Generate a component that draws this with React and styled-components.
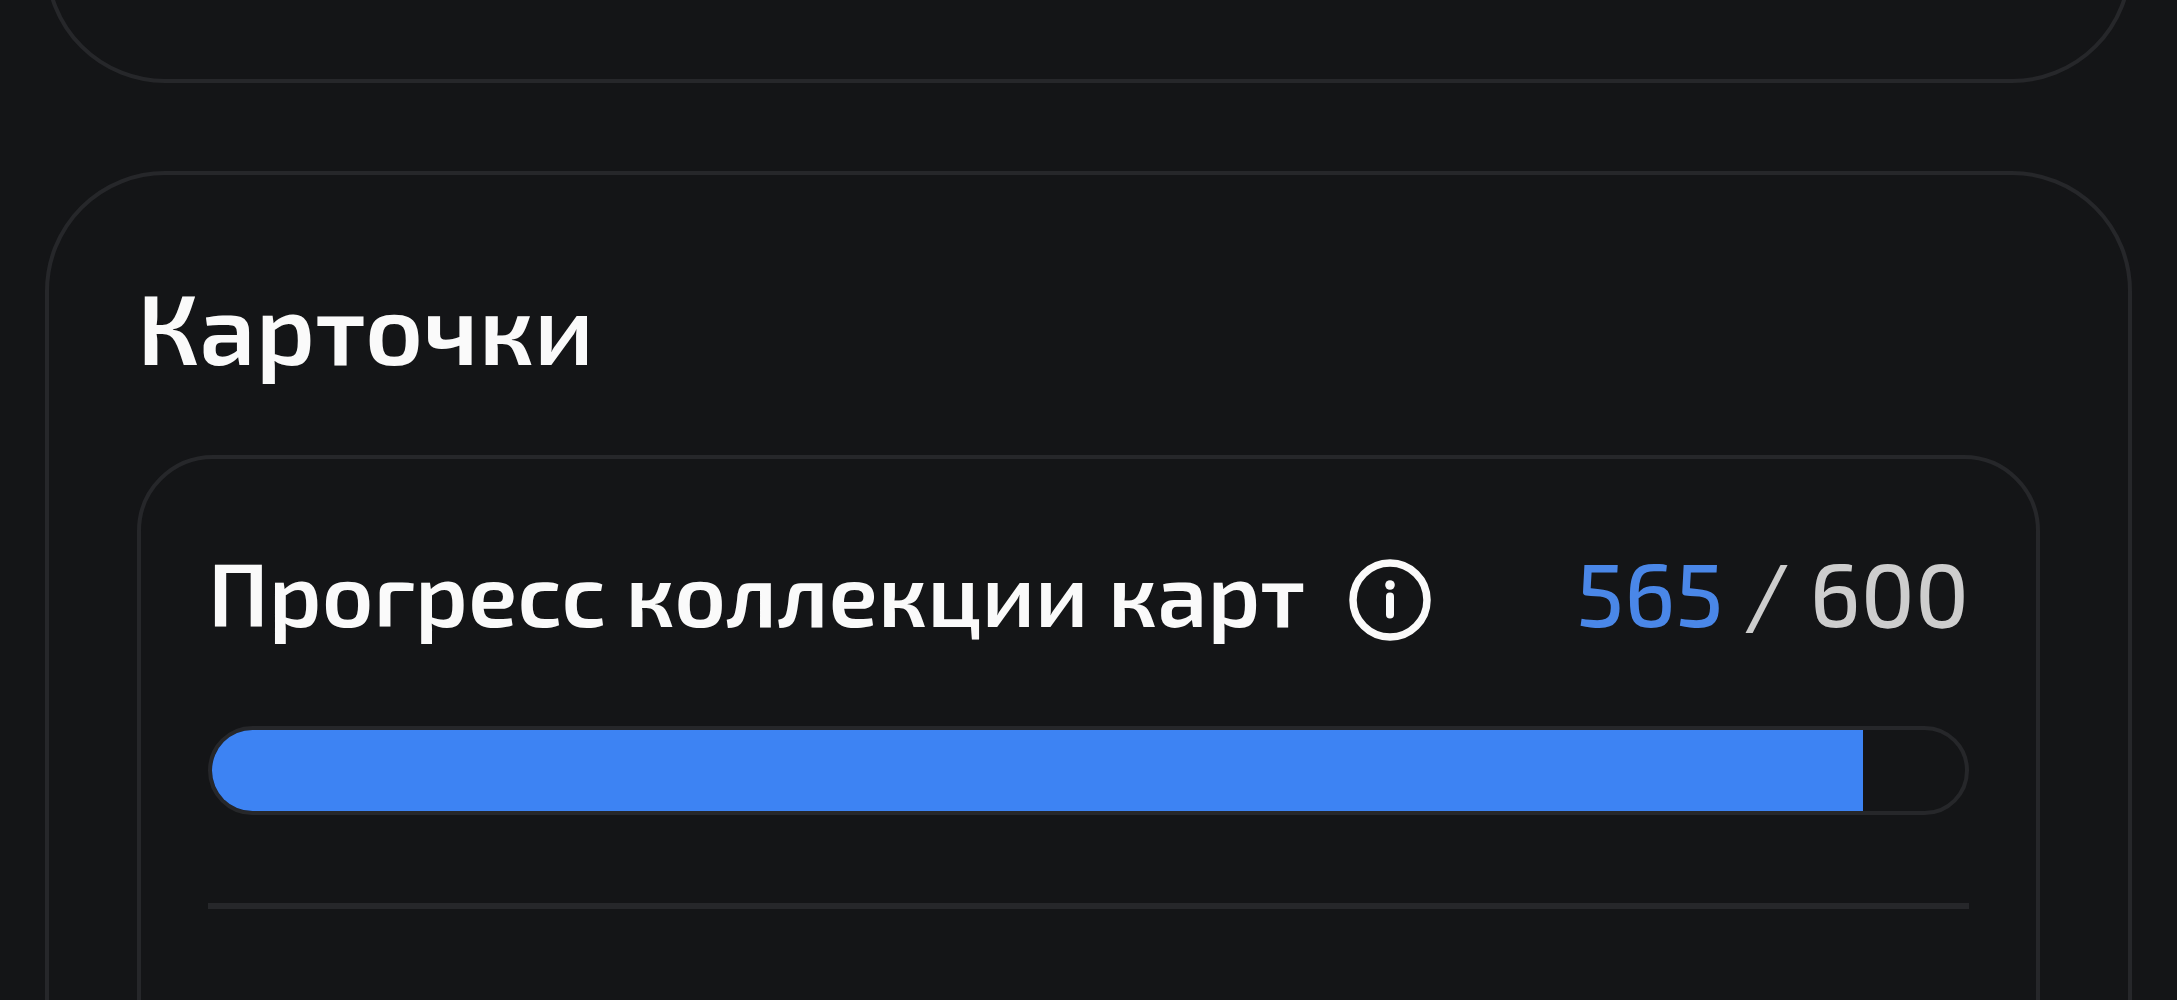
import React from "react";
import styled, { createGlobalStyle } from "styled-components";

const line = "#26272a";

const GlobalStyle = createGlobalStyle`
  *, *::before, *::after {
    box-sizing: border-box;
  }

  body {
    margin: 0;
    background: #141517;
    color: #fafafa;
    font-family: "Exo 2", Roboto, sans-serif;
  }
`;

const Page = styled.main`
  display: flex;
  flex-direction: column;
  gap: 88px;
  height: 100vh;
  padding: 0 45px;
  overflow: hidden;
`;

const Card = styled.section`
  flex: none;
  min-height: 1200px;
  padding: 88px;
  border: 4px solid ${line};
  border-radius: 120px;
`;

/* The end of the card that has been scrolled past. */
const PreviousCard = styled(Card)`
  min-height: 0;
  height: 320px;
  margin-top: -237px;
`;

const Title = styled.h2`
  margin: 0 0 68px;
  font-size: 100px;
  font-weight: 600;
  line-height: 124px;
`;

const Panel = styled.div`
  min-height: 900px;
  padding: 67px;
  border: 4px solid ${line};
  border-radius: 76px;
`;

const Header = styled.div`
  display: flex;
  align-items: flex-start;
  gap: 44px;
  margin-bottom: 52px;
  font-size: 89px;
  line-height: 132px;
  white-space: nowrap;
`;

const Label = styled.h3`
  margin: 0;
  font-size: inherit;
  font-weight: 600;
`;

const InfoButton = styled.button`
  display: flex;
  padding: 33px 0;
  border: 0;
  background: none;
  color: inherit;
  cursor: pointer;
`;

const Count = styled.span`
  margin-left: auto;
  color: #cdcdcd;
  font-weight: 500;
`;

const Current = styled.span`
  color: #4a87e8;
`;

const Track = styled.div`
  height: 89px;
  border: 4px solid ${line};
  border-radius: 45px;
  overflow: hidden;
`;

const Fill = styled.div`
  height: 100%;
  background: #3d83f3;
`;

const Divider = styled.hr`
  height: 6px;
  margin: 88px 0 0;
  border: 0;
  background: ${line};
`;

function InfoIcon() {
  return (
    <svg width="82" height="82" viewBox="0 0 82 82" fill="none" aria-hidden="true">
      <circle cx="41" cy="41" r="37" stroke="currentColor" strokeWidth="7.5" />
      <circle cx="41" cy="26" r="4.8" fill="currentColor" />
      <path d="M41 37.5v18" stroke="currentColor" strokeWidth="8" strokeLinecap="round" />
    </svg>
  );
}

function CollectionProgress({ value, max }) {
  return (
    <Panel>
      <Header>
        <Label id="progress-label">Прогресс коллекции карт</Label>
        <InfoButton type="button" aria-labelledby="progress-label">
          <InfoIcon />
        </InfoButton>
        <Count>
          <Current>{value}</Current> / {max}
        </Count>
      </Header>
      <Track
        role="progressbar"
        aria-labelledby="progress-label"
        aria-valuenow={value}
        aria-valuemin={0}
        aria-valuemax={max}
      >
        <Fill style={{ width: `${(value / max) * 100}%` }} />
      </Track>
      <Divider />
    </Panel>
  );
}

export default function App() {
  return (
    <>
      <GlobalStyle />
      <Page>
        <PreviousCard />
        <Card>
          <Title>Карточки</Title>
          <CollectionProgress value={565} max={600} />
        </Card>
      </Page>
    </>
  );
}
